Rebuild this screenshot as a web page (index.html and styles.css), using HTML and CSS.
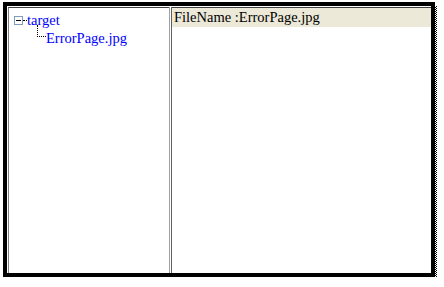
FILE: index.html
```html
<!DOCTYPE html>
<html lang="en">
<head>
    <meta charset="UTF-8">
    <title>File Browser</title>
    <link rel="stylesheet" href="styles.css">
</head>
<body>
    <div class="frame">
        <div class="inner">
            <div class="tree">
                <div class="node">
                    <svg class="toggle" width="9" height="9" viewBox="0 0 9 9">
                        <rect x="0.5" y="0.5" width="8" height="8" fill="#fff" stroke="#7f9db9"/>
                        <rect x="2" y="4" width="5" height="1" fill="#000"/>
                    </svg><span class="dash"></span><span class="label">target</span>
                </div>
                <div class="node child">
                    <span class="elbow"></span><span class="label">ErrorPage.jpg</span>
                </div>
            </div>
            <div class="splitter"></div>
            <div class="detail">
                <div class="detail-head">FileName :ErrorPage.jpg</div>
            </div>
        </div>
    </div>
</body>
</html>
```

FILE: styles.css
```css
body {
    margin: 0;
    background: #ffffff;
    font-family: 'Liberation Serif', 'Times New Roman', serif;
    font-size: 14.5px;
}

.frame {
    position: relative;
    margin: 2px 0 0 3px;
    width: 424px;
    height: 267px;
    border: 4px solid #000000;
    background: #ffffff;
}

.frame::before {
    content: '';
    position: absolute;
    top: 0;
    left: 0;
    right: -6px;
    bottom: -7px;
    z-index: -1;
    background-color: #ffffff;
    background-image: conic-gradient(#000 25%, #fff 0 50%, #000 0 75%, #fff 0);
    background-size: 2px 2px;
}

.inner {
    display: flex;
    height: 100%;
    box-sizing: border-box;
    border-top: 1px solid #ffffff;
    border-left: 1px solid #ffffff;
}

.tree {
    box-sizing: border-box;
    width: 161px;
    border-top: 1px solid #404040;
    border-left: 1px solid #808080;
    padding: 3px 0 0 5px;
    color: #0000ff;
}

.node {
    display: flex;
    align-items: center;
    height: 18px;
}

.toggle {
    display: block;
}

.dash {
    width: 4px;
    border-top: 1px dotted #000;
}

.child {
    padding-left: 23px;
}

.elbow {
    align-self: flex-start;
    width: 8px;
    height: 11px;
    margin-top: -4px;
    border-left: 1px dotted #000;
    border-bottom: 1px dotted #000;
}

.splitter {
    width: 1px;
    border-left: 1px solid #a0a0a0;
    border-right: 1px solid #606060;
}

.detail {
    flex: 1;
    border-top: 1px solid #404040;
}

.detail-head {
    background: #ece9d8;
    height: 19px;
    line-height: 19px;
    padding-left: 2px;
    color: #000000;
}
```
